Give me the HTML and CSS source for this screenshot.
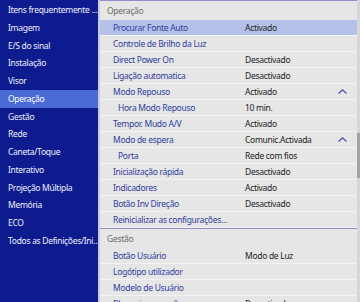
FILE: index.html
```html
<!DOCTYPE html>
<html lang="pt">
<head>
  <meta charset="UTF-8">
  <title>Menu de configuração</title>
  <link rel="stylesheet" href="styles.css">
</head>
<body>

<div class="menu">
  <ul class="sidebar">
    <li>Itens frequentemente ...</li>
    <li>Imagem</li>
    <li>E/S do sinal</li>
    <li>Instalação</li>
    <li>Visor</li>
    <li class="active">Operação</li>
    <li>Gestão</li>
    <li>Rede</li>
    <li>Caneta/Toque</li>
    <li>Interativo</li>
    <li>Projeção Múltipla</li>
    <li>Memória</li>
    <li>ECO</li>
    <li>Todos as Definições/Ini...</li>
  </ul>

  <div class="panel">
    <div class="section">Operação</div>
    <div class="row selected"><span>Procurar Fonte Auto</span><span>Activado</span></div>
    <div class="row"><span>Controle de Brilho da Luz</span><span></span></div>
    <div class="row"><span>Direct Power On</span><span>Desactivado</span></div>
    <div class="row"><span>Ligação automatica</span><span>Desactivado</span></div>
    <div class="row"><span>Modo Repouso</span><span>Activado</span>
      <svg class="caret" width="9" height="5" viewBox="0 0 9 5"><polyline points="0.5,4.5 4.5,0.8 8.5,4.5" /></svg></div>
    <div class="row sub"><span>Hora Modo Repouso</span><span>10 min.</span></div>
    <div class="row"><span>Tempor. Mudo A/V</span><span>Activado</span></div>
    <div class="row"><span>Modo de espera</span><span>Comunic.Activada</span>
      <svg class="caret" width="9" height="5" viewBox="0 0 9 5"><polyline points="0.5,4.5 4.5,0.8 8.5,4.5" /></svg></div>
    <div class="row sub"><span>Porta</span><span>Rede com fios</span></div>
    <div class="row"><span>Inicialização rápida</span><span>Desactivado</span></div>
    <div class="row"><span>Indicadores</span><span>Activado</span></div>
    <div class="row"><span>Botão Inv Direção</span><span>Desactivado</span></div>
    <div class="row"><span>Reinicializar as configurações...</span><span></span></div>
    <div class="section">Gestão</div>
    <div class="row"><span>Botão Usuário</span><span>Modo de Luz</span></div>
    <div class="row"><span>Logótipo utilizador</span><span></span></div>
    <div class="row"><span>Modelo de Usuário</span><span></span></div>
    <div class="row"><span>Bloqueio operação</span><span>Desactivado</span></div>

    <div class="scrollbar"><div class="thumb"></div></div>
  </div>
</div>

</body>
</html>
```

FILE: styles.css
```css
body { margin: 0; font-family: "Noto Sans", "Open Sans", sans-serif; font-size: 8.5px; letter-spacing: -0.3px; }
.menu { display: flex; width: 360px; height: 302px; overflow: hidden; background: #e6e6e6; }

.sidebar {
  list-style: none;
  margin: 0;
  padding: 1px 0 0 0;
  width: 98px;
  flex: none;
  background: #0e1b8e;
  border-right: 2px solid #c9cbe0;
}
.sidebar li {
  height: 17.75px;
  line-height: 17.75px;
  padding-left: 8px;
  color: #eef0ff;
  white-space: nowrap;
  overflow: hidden;
}
.sidebar li.active { background: #4a6bd6; color: #fff; }

.panel { position: relative; flex: 1; overflow: hidden; }
.section {
  height: 20px;
  line-height: 19px;
  padding-left: 7px;
  color: #6b6b6b;
  border-top: 1px solid #8d8fc8;
  box-sizing: border-box;
}
.row {
  display: grid;
  grid-template-columns: 132px 1fr 9px;
  align-items: center;
  height: 16px;
  padding: 0 10px 0 13px;
  margin-right: 3px;
  color: #2f3ca0;
  border-bottom: 1px solid #f3f3f3;
  box-sizing: border-box;
  white-space: nowrap;
}
.row span:nth-child(2) { color: #222; }
.row.sub span:first-child { padding-left: 5px; }
.row.selected { background: #b5c1e8; }
.caret { fill: none; stroke: #3a4ab0; stroke-width: 1.1; }

.scrollbar {
  position: absolute;
  top: 0;
  right: 0;
  width: 3px;
  height: 302px;
  background: #d6d6d6;
}
.thumb { margin-top: 133px; height: 45px; background: #a3a3a3; }
```
